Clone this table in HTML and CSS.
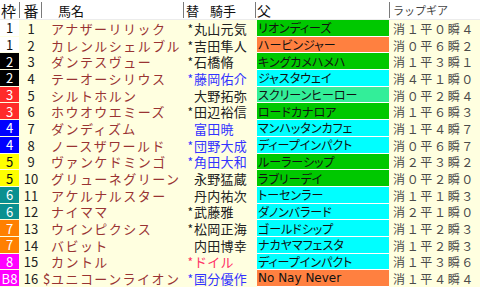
FILE: index.html
```html
<!DOCTYPE html>
<html lang="ja">
<head>
<meta charset="utf-8">
<title>出馬表</title>
<link rel="stylesheet" href="styles.css">
</head>
<body>
<div class="table">
  <div class="row head">
    <div class="h h-waku">枠</div>
    <div class="h h-ban">番</div>
    <div class="h h-name">馬名</div>
    <div class="h h-jockey"><span>替</span><span class="kishu">騎手</span></div>
    <div class="h h-sire">父</div>
    <div class="h h-lap">ラップギア</div>
  </div>

  <div class="row"><div class="waku w1">1</div><div class="ban">1</div><div class="mark"></div><div class="name">アナザーリリック</div><div class="chg">*</div><div class="jockey">丸山元気</div><div class="sire green">リオンディーズ</div><div class="lap">消１平０瞬４</div></div>
  <div class="row"><div class="waku w1">1</div><div class="ban">2</div><div class="mark"></div><div class="name">カレンルシェルブル</div><div class="chg">*</div><div class="jockey">吉田隼人</div><div class="sire orange">ハービンジャー</div><div class="lap">消０平６瞬２</div></div>
  <div class="row"><div class="waku w2">2</div><div class="ban">3</div><div class="mark"></div><div class="name">ダンテスヴュー</div><div class="chg">*</div><div class="jockey">石橋脩</div><div class="sire green">キングカメハメハ</div><div class="lap">消１平３瞬１</div></div>
  <div class="row"><div class="waku w2">2</div><div class="ban">4</div><div class="mark"></div><div class="name">テーオーシリウス</div><div class="chg blue">*</div><div class="jockey blue">藤岡佑介</div><div class="sire cyan">ジャスタウェイ</div><div class="lap">消４平１瞬０</div></div>
  <div class="row"><div class="waku w3">3</div><div class="ban">5</div><div class="mark"></div><div class="name">シルトホルン</div><div class="chg"></div><div class="jockey">大野拓弥</div><div class="sire mint">スクリーンヒーロー</div><div class="lap">消０平２瞬４</div></div>
  <div class="row"><div class="waku w3">3</div><div class="ban">6</div><div class="mark"></div><div class="name">ホウオウエミーズ</div><div class="chg">*</div><div class="jockey">田辺裕信</div><div class="sire green">ロードカナロア</div><div class="lap">消１平６瞬３</div></div>
  <div class="row"><div class="waku w4">4</div><div class="ban">7</div><div class="mark"></div><div class="name">ダンディズム</div><div class="chg"></div><div class="jockey blue">富田暁</div><div class="sire cyan">マンハッタンカフェ</div><div class="lap">消１平４瞬７</div></div>
  <div class="row"><div class="waku w4">4</div><div class="ban">8</div><div class="mark"></div><div class="name">ノースザワールド</div><div class="chg blue">*</div><div class="jockey blue">団野大成</div><div class="sire cyan">ディープインパクト</div><div class="lap">消０平６瞬７</div></div>
  <div class="row"><div class="waku w5">5</div><div class="ban">9</div><div class="mark"></div><div class="name">ヴァンケドミンゴ</div><div class="chg blue">*</div><div class="jockey blue">角田大和</div><div class="sire green">ルーラーシップ</div><div class="lap">消２平３瞬２</div></div>
  <div class="row"><div class="waku w5">5</div><div class="ban">10</div><div class="mark"></div><div class="name">グリューネグリーン</div><div class="chg"></div><div class="jockey">永野猛蔵</div><div class="sire green">ラブリーデイ</div><div class="lap">消０平２瞬０</div></div>
  <div class="row"><div class="waku w6">6</div><div class="ban">11</div><div class="mark"></div><div class="name">アケルナルスター</div><div class="chg"></div><div class="jockey">丹内祐次</div><div class="sire cyan">トーセンラー</div><div class="lap">消１平１瞬３</div></div>
  <div class="row"><div class="waku w6">6</div><div class="ban">12</div><div class="mark"></div><div class="name">ナイママ</div><div class="chg">*</div><div class="jockey">武藤雅</div><div class="sire cyan">ダノンバラード</div><div class="lap">消２平１瞬０</div></div>
  <div class="row"><div class="waku w7">7</div><div class="ban">13</div><div class="mark"></div><div class="name">ウインピクシス</div><div class="chg">*</div><div class="jockey">松岡正海</div><div class="sire cyan">ゴールドシップ</div><div class="lap">消１平２瞬３</div></div>
  <div class="row"><div class="waku w7">7</div><div class="ban">14</div><div class="mark"></div><div class="name">バビット</div><div class="chg"></div><div class="jockey">内田博幸</div><div class="sire cyan">ナカヤマフェスタ</div><div class="lap">消１平２瞬３</div></div>
  <div class="row"><div class="waku w8">8</div><div class="ban">15</div><div class="mark"></div><div class="name">カントル</div><div class="chg red">*</div><div class="jockey red">ドイル</div><div class="sire cyan">ディープインパクト</div><div class="lap">消１平３瞬６</div></div>
  <div class="row"><div class="waku w8">B8</div><div class="ban">16</div><div class="mark">$</div><div class="name">ユニコーンライオン</div><div class="chg blue">*</div><div class="jockey blue">国分優作</div><div class="sire orange latin">No Nay Never</div><div class="lap">消１平４瞬４</div></div>
</div>
</body>
</html>
```

FILE: styles.css
```css
html, body {
  margin: 0;
  padding: 0;
  background: #ffffe0;
}

.table {
  width: 480px;
  height: 287px;
  display: flex;
  flex-direction: column;
  font-family: "Noto Sans CJK JP", sans-serif;
}

.row {
  display: grid;
  grid-template-columns: 20px 22px 9px 133px 10px 62px 134px 90px;
  flex: 1 1 0;
  min-height: 0;
  align-items: stretch;
}

.row > div {
  display: flex;
  align-items: center;
  white-space: nowrap;
  line-height: 15px;
  min-width: 0;
}

/* header */
.row.head {
  flex: 0 0 20px;
  background: #ffffff;
  box-shadow: inset 0 -1px 0 #ececec;
}

.h {
  font-size: 13px;
  line-height: 16px;
  color: #111;
  background: linear-gradient(#7a7a7a, #7a7a7a) right center / 1px 16px no-repeat;
}
.h-waku {
  font-size: 15px;
  padding-left: 1px;
}
.h-ban {
  font-size: 15px;
  justify-content: center;
}
.h-name {
  grid-column: span 2;
  padding-left: 16px;
}
.h-jockey {
  grid-column: span 2;
  padding-left: 2px;
}
.h-jockey .kishu {
  margin-left: 11px;
}
.h-sire {
  padding-left: 1px;
  font-size: 14px;
}
.h-lap {
  font-size: 11px;
  color: #444;
  padding-left: 3px;
  background: none;
}

/* body cells */
.waku {
  justify-content: center;
  font-size: 13px;
  margin: 0 1px 1px 0;
  color: #fff;
}
.w1 { background: #ffffff; color: #111; }
.w2 { background: #000000; }
.w3 { background: #ff2a2a; }
.w4 { background: #0000ff; }
.w5 { background: #ffff00; color: #111; }
.w6 { background: #0a9090; }
.w7 { background: #ff8000; }
.w8 { background: #ff00ff; }

.ban {
  justify-content: center;
  font-size: 13px;
  color: #222;
}

.mark {
  font-size: 13px;
  color: #993333;
  padding-left: 1px;
}

.name {
  font-size: 13px;
  letter-spacing: 1.45px;
  color: #993333;
}

.chg {
  justify-content: flex-end;
  font-size: 12px;
  color: #222;
  padding-right: 1px;
}

.jockey {
  font-size: 13px;
  letter-spacing: 0.25px;
  color: #222;
}

.blue { color: #3333ff; }
.red { color: #ff3366; }

.sire {
  font-size: 12px;
  color: #111;
  padding-left: 1px;
  margin: 0 1px 0 1px;
  border-bottom: 1px solid #ffffff;
  font-feature-settings: "palt";
}
.sire.latin {
  font-family: "DejaVu Sans", sans-serif;
  font-size: 12px;
  font-feature-settings: normal;
}
.green { background: #00c800; }
.orange { background: #ff8040; }
.cyan { background: #00ffff; }
.mint { background: #33ee99; }

.lap {
  font-size: 12px;
  letter-spacing: 1.67px;
  color: #4a4a4a;
  padding-left: 3px;
}
```
